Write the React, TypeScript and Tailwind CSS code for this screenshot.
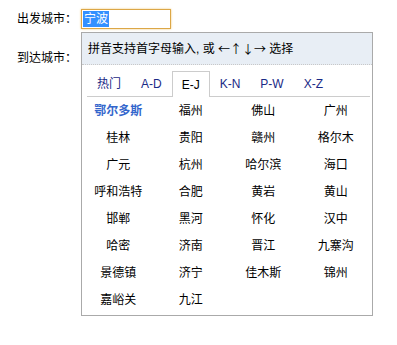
import React from "react"

const tabs = ["热门", "A-D", "E-J", "K-N", "P-W", "X-Z"]

const cities = [
  "鄂尔多斯", "福州", "佛山", "广州",
  "桂林", "贵阳", "赣州", "格尔木",
  "广元", "杭州", "哈尔滨", "海口",
  "呼和浩特", "合肥", "黄岩", "黄山",
  "邯郸", "黑河", "怀化", "汉中",
  "哈密", "济南", "晋江", "九寨沟",
  "景德镇", "济宁", "佳木斯", "锦州",
  "嘉峪关", "九江",
]

export default function App() {
  return (
    <div
      className="relative h-[345px] w-[397px] bg-white text-[12px] text-black"
      style={{ fontFamily: '"Liberation Sans", "Noto Sans CJK SC", sans-serif' }}
    >
      <div className="pl-[17px] pt-[9px]">
        <div className="flex h-[20px] items-center">
          <span className="w-[64px]">出发城市：</span>
          <div className="flex h-[20px] w-[90px] items-center border border-[#dca746] pl-[1px] shadow-[0_0_2px_#f0c878]">
            <span className="bg-[#3390ff] px-[1px] leading-[16px] text-white">宁波</span>
          </div>
        </div>
        <div className="mt-[19px] flex h-[20px] items-center">
          <span className="w-[64px]">到达城市：</span>
        </div>
      </div>

      {/* city picker dropdown */}
      <div className="absolute left-[81px] top-[32px] flex h-[284px] w-[292px] flex-col border border-[#aaaaaa] bg-white">
        <div className="flex h-[32px] items-center border-b border-dotted border-[#c8c8c8] bg-[#e8eef5] pl-[6px]">
          拼音支持首字母输入, 或&nbsp;
          <span className="font-['Noto_Sans_CJK_SC',sans-serif]">←↑↓→</span>
          &nbsp;选择
        </div>

        <div className="ml-[5px] mr-[2px] mt-[6px] flex border-b border-[#cccccc]">
          {tabs.map((t) => (
            <div
              key={t}
              className={
                t === "E-J"
                  ? "-mb-px flex h-[26px] items-center border border-b-0 border-[#cccccc] bg-white px-[9px] text-black"
                  : "flex h-[25px] items-center px-[10px] text-[#1a2a86]"
              }
            >
              {t}
            </div>
          ))}
        </div>

        <div className="grid grid-cols-4">
          {cities.map((c) => (
            <div
              key={c}
              className={
                c === "鄂尔多斯"
                  ? "flex h-[27px] items-center justify-center font-bold text-[#3366cc]"
                  : "flex h-[27px] items-center justify-center"
              }
            >
              {c}
            </div>
          ))}
        </div>
      </div>
    </div>
  )
}
